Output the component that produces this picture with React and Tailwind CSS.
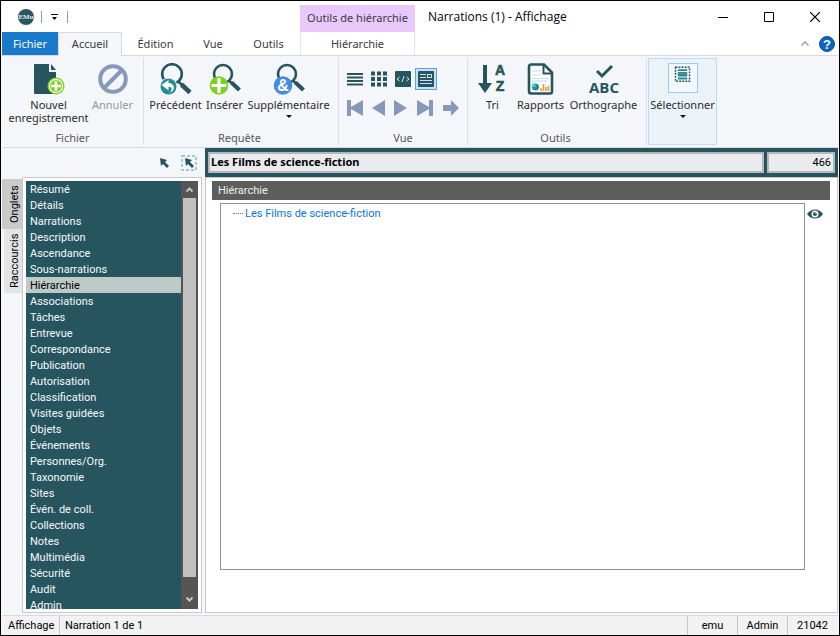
import React, { useState } from 'react';

const tabs = [
    'Résumé', 'Détails', 'Narrations', 'Description', 'Ascendance', 'Sous-narrations', 'Hiérarchie',
    'Associations', 'Tâches', 'Entrevue', 'Correspondance', 'Publication', 'Autorisation',
    'Classification', 'Visites guidées', 'Objets', 'Événements', 'Personnes/Org.', 'Taxonomie',
    'Sites', 'Évén. de coll.', 'Collections', 'Notes', 'Multimédia', 'Sécurité', 'Audit', 'Admin',
];

function LogoIcon() {
    return (
        <svg width="16" height="16" viewBox="0 0 16 16">
            <circle cx="8" cy="8" r="8" fill="#2a5761" />
            <text x="8" y="10" textAnchor="middle" fontSize="7" fontWeight="700" fontFamily="Liberation Serif, serif" fill="#e4eef0">EMu</text>
        </svg>
    );
}

function DownArrow() {
    return (
        <svg width="6" height="3" viewBox="0 0 6 3" className="mt-1">
            <path d="M0 0h6L3 3z" fill="#111" />
        </svg>
    );
}

function NewRecordIcon() {
    return (
        <svg width="32" height="32" viewBox="0 0 32 32">
            <path d="M1 2a1 1 0 0 1 1-1h14v8h7v22H2a1 1 0 0 1-1-1z" fill="#27555f" />
            <path d="M18 1l5 6h-5z" fill="#27555f" />
            <circle cx="23" cy="23" r="8.500" fill="#7bd11f" />
            <circle cx="23" cy="23" r="6.600" fill="none" stroke="#fff" strokeWidth="1.200" />
            <path d="M23 18v10M18 23h10" stroke="#fff" strokeWidth="2.600" />
        </svg>
    );
}

function CancelIcon() {
    return (
        <svg width="32" height="32" viewBox="0 0 32 32">
            <circle cx="16" cy="16" r="12.800" fill="none" stroke="#8799bb" strokeWidth="4" />
            <path d="M7 25L25 7" stroke="#8799bb" strokeWidth="4" />
        </svg>
    );
}

function PreviousIcon() {
    return (
        <svg width="32" height="32" viewBox="0 0 32 32">
            <circle cx="12" cy="11" r="9.800" fill="none" stroke="#27555f" strokeWidth="2.600" />
            <path d="M18.500 18.500l4 4" stroke="#27555f" strokeWidth="2.500" />
            <path d="M21.500 21.500l8.500 8" stroke="#27555f" strokeWidth="4.500" />
            <circle cx="8.500" cy="23.500" r="9" fill="#f4f6f9" />
            <circle cx="8.500" cy="23.500" r="8" fill="#278c92" />
            <path d="M1.500 22l7-5v3c6 0 8 7 1 10 4-4 2-6.500-1-6v3.500z" fill="#fff" />
        </svg>
    );
}

function InsertIcon() {
    return (
        <svg width="32" height="32" viewBox="0 0 32 32">
            <circle cx="14" cy="11" r="9" fill="none" stroke="#27555f" strokeWidth="2.600" />
            <path d="M20 17.500l3 3" stroke="#27555f" strokeWidth="2.500" />
            <path d="M22.500 19.500l8 7.500" stroke="#27555f" strokeWidth="4" />
            <circle cx="10" cy="22.500" r="9.300" fill="#7bd11f" />
            <path d="M10 15v15M2.500 22.500h15" stroke="#fff" strokeWidth="3.200" />
        </svg>
    );
}

function AdditionalIcon() {
    return (
        <svg width="32" height="32" viewBox="0 0 32 32" className="overflow-visible">
            <circle cx="14" cy="11" r="9" fill="none" stroke="#27555f" strokeWidth="2.600" />
            <path d="M20 17.500l3 3" stroke="#27555f" strokeWidth="2.500" />
            <path d="M22.500 19.500l8 7.500" stroke="#27555f" strokeWidth="4" />
            <circle cx="10" cy="22.500" r="9.300" fill="#438be0" />
            <text x="10" y="28" textAnchor="middle" fontSize="16" fontWeight="700" fontFamily="Liberation Sans, sans-serif" fill="#fff">&amp;</text>
        </svg>
    );
}

function SortIcon() {
    return (
        <svg width="32" height="32" viewBox="0 0 32 32" className="overflow-visible">
            <path d="M6 2h4v18h5l-7 10-7-10h5z" fill="#27555f" />
            <text x="23" y="12" textAnchor="middle" fontSize="14" fontWeight="700" fontFamily="Liberation Sans, sans-serif" fill="#27555f" stroke="#27555f" strokeWidth=".6">A</text>
            <text x="23" y="28" textAnchor="middle" fontSize="14" fontWeight="700" fontFamily="Liberation Sans, sans-serif" fill="#27555f" stroke="#27555f" strokeWidth=".6">Z</text>
        </svg>
    );
}

function ReportIcon() {
    return (
        <svg width="32" height="32" viewBox="0 0 32 32">
            <path d="M6 1.500h13l8 8v19a2 2 0 0 1-2 2H6a2 2 0 0 1-2-2v-25a2 2 0 0 1 2-2z" fill="#fff" stroke="#27555f" strokeWidth="2.600" />
            <path d="M18.500 2v8.500H27" fill="none" stroke="#27555f" strokeWidth="2" />
            <path d="M7 8h9M7 12h9M7 15.500h16M7 18h15" stroke="#c2dcf0" strokeWidth="1" />
            <circle cx="10.500" cy="24" r="3.500" fill="#278c92" />
            <path d="M10.500 24v-4a4 4 0 0 0-4 4z" fill="#3fe0b0" />
            <path d="M16 28v-3M18.500 28v-7M21 28v-4M23.500 28v-5" stroke="#e29a3a" strokeWidth="1.600" />
        </svg>
    );
}

function SpellIcon() {
    return (
        <svg width="32" height="32" viewBox="0 0 32 32" className="overflow-visible">
            <path d="M9 8l5 5L24 3" fill="none" stroke="#27555f" strokeWidth="3" />
            <text x="16" y="30" textAnchor="middle" fontSize="15" fontWeight="700" fontFamily="Open Sans, sans-serif" fill="#27555f">ABC</text>
        </svg>
    );
}

function SelectIcon() {
    return (
        <svg width="30" height="30" viewBox="0 0 30 30" className="mb-[2px] border border-[#99c9f7] bg-[#f4f8fc]">
            <rect x="7" y="3.500" width="15" height="15" fill="none" stroke="#27555f" strokeWidth="1.600" strokeDasharray="2 1.250" />
            <path d="M9.500 6.500h10M9.500 9.500h10M9.500 12.500h10M9.500 15.500h10" stroke="#278c92" strokeWidth="2" />
            <path d="M9.500 11h10" stroke="#27555f" strokeWidth="1" />
        </svg>
    );
}

function RibbonButton({ icon, label, width, disabled, menu }) {
    return (
        <button disabled={disabled} className={`flex shrink-0 flex-col items-center whitespace-pre text-center ${width} ${disabled ? 'text-[#93969c]' : 'text-[#2b2b2b]'}`}>
            {icon}
            <span className="mt-[3px]">{label}</span>
            {menu && <DownArrow />}
        </button>
    );
}

function RibbonGroup({ title, width, children }) {
    return (
        <section className={`flex shrink-0 flex-col border-r border-[#dcdfe3] pb-px ${width}`}>
            <div className="flex flex-1 items-start justify-center pt-[5px]">{children}</div>
            <h2 className="text-center text-[#55585c]">{title}</h2>
        </section>
    );
}

function ViewButtons() {
    return (
        <div className="flex flex-col pt-1">
            <div className="flex items-center">
                <button aria-label="Liste" className="flex h-6 w-6 items-center justify-center">
                    <svg width="16" height="14" viewBox="0 0 16 14"><path d="M0 2h16M0 5.500h16M0 9h16M0 12.500h16" stroke="#27555f" strokeWidth="2" /></svg>
                </button>
                <button aria-label="Vignettes" className="flex h-6 w-6 items-center justify-center">
                    <svg width="16" height="16" viewBox="0 0 16 16"><path d="M0 2.500h16M0 8h16M0 13.500h16" stroke="#27555f" strokeWidth="4" strokeDasharray="4 2" /></svg>
                </button>
                <button aria-label="Code" className="flex h-6 w-6 items-center justify-center">
                    <svg width="16" height="16" viewBox="0 0 16 16">
                        <rect width="16" height="16" rx="1" fill="#27555f" />
                        <path d="M4.500 6L2 8l2.500 2M11.500 6L14 8l-2.500 2M9 5l-2 6" fill="none" stroke="#dce8ea" />
                    </svg>
                </button>
                <button aria-label="Formulaire" className="flex h-[22px] w-[22px] items-center justify-center border border-[#5ca0e6] bg-[#c9e0f8]">
                    <svg width="16" height="16" viewBox="0 0 16 16">
                        <rect width="16" height="16" rx="1" fill="#27555f" />
                        <path d="M2 3.500h6M2 6.500h6M2 9.500h12M2 12.500h12" stroke="#c9e0f8" />
                        <rect x="9.500" y="3.500" width="4" height="3" fill="none" stroke="#c9e0f8" />
                    </svg>
                </button>
            </div>
            <div className="mt-px flex items-center">
                <button aria-label="Premier" className="flex h-8 w-6 items-center justify-center">
                    <svg width="16" height="16" viewBox="0 0 16 16"><path d="M0 0h4v7L16 0v16L4 9v7H0z" fill="#8799bb" /></svg>
                </button>
                <button aria-label="Fiche précédente" className="flex h-8 w-6 items-center justify-center">
                    <svg width="14" height="16" viewBox="0 0 14 16"><path d="M13 0v16L0 8z" fill="#8799bb" /></svg>
                </button>
                <button aria-label="Fiche suivante" className="flex h-8 w-5 items-center justify-center">
                    <svg width="14" height="16" viewBox="0 0 14 16"><path d="M0 0v16l13-8z" fill="#8799bb" /></svg>
                </button>
                <button aria-label="Dernier" className="flex h-8 w-7 items-center justify-center">
                    <svg width="16" height="16" viewBox="0 0 16 16"><path d="M16 0h-4v7L0 0v16l12-7v7h4z" fill="#8799bb" /></svg>
                </button>
                <button aria-label="Aller à" className="flex h-8 w-6 items-center justify-center">
                    <svg width="16" height="16" viewBox="0 0 16 16"><path d="M0 5h8V0l8 8-8 8v-5H0z" fill="#8799bb" /></svg>
                </button>
            </div>
        </div>
    );
}

function Header() {
    return (
        <header className="flex h-[55px] shrink-0 border-b border-[#d6d9dd] bg-white text-[#3a3a3a]">
            <div className="flex flex-col">
                <div className="flex h-[31px] items-center pl-4">
                    <LogoIcon />
                    <span className="ml-[7px] h-3 w-px bg-[#999]" />
                    <button aria-label="Personnaliser" className="mx-[9px]">
                        <svg width="7" height="6" viewBox="0 0 7 6"><path d="M0 0h7v1H0zM1 3h5L3.500 6z" fill="#000" /></svg>
                    </button>
                    <span className="h-3 w-px bg-[#999]" />
                </div>
                <nav className="flex flex-1">
                    <button className="w-14 bg-[#1979ca] pt-px text-white">Fichier</button>
                    <button className="-mb-px w-16 border border-b-0 border-[#d6d9dd] bg-[#f4f6f9]">Accueil</button>
                    <button className="w-[67px] pt-px">Édition</button>
                    <button className="w-12 pt-px">Vue</button>
                    <button className="w-[63px] pt-px">Outils</button>
                </nav>
            </div>
            <div className="flex w-[115px] shrink-0 flex-col pt-1">
                <div className="flex h-[27px] items-center justify-center bg-[#e9c9fc]">Outils de hiérarchie</div>
                <button className="flex-1 border-x border-[#e2e4e7] pt-px">Hiérarchie</button>
            </div>
            <div className="flex min-w-0 flex-1 flex-col">
                <div className="flex h-[31px] items-center justify-between pl-[13px] text-black">
                    <h1 className="font-[Open_Sans,sans-serif] text-xs">Narrations (1) - Affichage</h1>
                    <div className="flex">
                        <button aria-label="Réduire" className="flex w-[46px] justify-center">
                            <svg width="10" height="10" viewBox="0 0 10 10"><path d="M0 5.500h10" stroke="#000" /></svg>
                        </button>
                        <button aria-label="Agrandir" className="flex w-[46px] justify-center">
                            <svg width="10" height="10" viewBox="0 0 10 10"><path d="M.5.500h9v9h-9z" fill="none" stroke="#000" /></svg>
                        </button>
                        <button aria-label="Fermer" className="flex w-[46px] justify-center">
                            <svg width="10" height="10" viewBox="0 0 10 10"><path d="M0 0l10 10M10 0L0 10" stroke="#000" strokeWidth="1.200" /></svg>
                        </button>
                    </div>
                </div>
                <div className="flex flex-1 items-center justify-end gap-[10px] pr-[3px]">
                    <button aria-label="Réduire le ruban">
                        <svg width="8" height="5" viewBox="0 0 8 5"><path d="M.5 4.500L4 1l3.500 3.500" fill="none" stroke="#999" strokeWidth="1.300" /></svg>
                    </button>
                    <button aria-label="Aide">
                        <svg width="16" height="16" viewBox="0 0 16 16">
                            <circle cx="8" cy="8" r="7.500" fill="#0c65c2" stroke="#174f8c" />
                            <text x="8" y="12.500" textAnchor="middle" fontSize="13" fontWeight="700" fontFamily="Liberation Sans, sans-serif" fill="#fff">?</text>
                        </svg>
                    </button>
                </div>
            </div>
        </header>
    );
}

function Ribbon() {
    return (
        <div className="flex h-[92px] shrink-0 border-b border-[#d6d9dd] bg-[#f4f6f9] py-[2px] leading-[13px]">
            <RibbonGroup title="Fichier" width="w-[142px]">
                <RibbonButton icon={<NewRecordIcon />} label={'Nouvel\nenregistrement'} width="w-20" />
                <RibbonButton icon={<CancelIcon />} label="Annuler" width="w-12" disabled />
            </RibbonGroup>
            <RibbonGroup title="Requête" width="w-[195px] pr-[3px]">
                <RibbonButton icon={<PreviousIcon />} label="Précédent" width="w-14" />
                <RibbonButton icon={<InsertIcon />} label="Insérer" width="w-[42px]" />
                <RibbonButton icon={<AdditionalIcon />} label="Supplémentaire" width="w-[86px]" menu />
            </RibbonGroup>
            <RibbonGroup title="Vue" width="w-[129px]">
                <ViewButtons />
            </RibbonGroup>
            <RibbonGroup title="Outils" width="w-[179px] pr-[3px]">
                <RibbonButton icon={<SortIcon />} label="Tri" width="w-10" />
                <RibbonButton icon={<ReportIcon />} label="Rapports" width="w-14" />
                <RibbonButton icon={<SpellIcon />} label="Orthographe" width="w-[70px]" />
            </RibbonGroup>
            <div className="ml-px flex shrink-0 items-start border border-[#bcdcf8] bg-[#ecf3f8] pt-1">
                <RibbonButton icon={<SelectIcon />} label="Sélectionner" width="w-[67px]" menu />
            </div>
        </div>
    );
}

function Sidebar({ current, onSelect }) {
    return (
        <aside className="flex w-[200px] shrink-0 flex-col">
            <div className="flex h-[29px] shrink-0 items-center justify-end gap-3 pr-[5px]">
                <button aria-label="Pointeur">
                    <svg width="10" height="10" viewBox="0 0 10 10"><path d="M1 0l7 2-2 2 4 4-2 2-4-4-2 2z" fill="#27555f" /></svg>
                </button>
                <button aria-label="Sélection">
                    <svg width="16" height="16" viewBox="0 0 16 16">
                        <rect x="1" y="1" width="14" height="14" fill="none" stroke="#7fc0c2" strokeWidth="1.500" strokeDasharray="3 2" />
                        <path d="M4 3l7 2-2 2 4 4-2 2-4-4-2 2z" fill="#27555f" />
                    </svg>
                </button>
            </div>
            <div className="flex min-h-0 flex-1">
                <div className="flex w-5 shrink-0 flex-col items-end pt-[2px] leading-[14px] text-black">
                    <button className="h-[50px] w-5 rotate-180 bg-[#cacaca] pr-[6px] [writing-mode:vertical-rl]">Onglets</button>
                    <button className="h-16 w-[18px] rotate-180 bg-[#e4e4e4] pr-1 [writing-mode:vertical-rl]">Raccourcis</button>
                </div>
                <div className="flex min-w-0 flex-1 border border-[#c8c8c8] bg-white p-[3px]">
                    <ul className="min-w-0 flex-1 overflow-hidden bg-[#27555f] leading-[14px] text-[#f6f9f9]">
                        {tabs.map(tab => (
                            <li key={tab}>
                                <button
                                    onClick={() => onSelect(tab)}
                                    className={`block w-full pt-[2px] pl-1 text-left ${tab === current ? 'bg-[#bccbc8] text-black' : ''}`}
                                >
                                    {tab}
                                </button>
                            </li>
                        ))}
                    </ul>
                    <div className="flex w-[17px] shrink-0 flex-col items-center bg-[#555]">
                        <button aria-label="Défiler vers le haut" className="flex h-[17px] items-center">
                            <svg width="7" height="5" viewBox="0 0 7 5"><path d="M.5 4.500l3-3 3 3" fill="none" stroke="#c8c8c8" strokeWidth="2" /></svg>
                        </button>
                        <div className="w-[13px] flex-1 bg-[#c1c1c1]" />
                        <button aria-label="Défiler vers le bas" className="flex h-8 items-center pt-4 pb-1">
                            <svg width="7" height="5" viewBox="0 0 7 5"><path d="M.5.500l3 3 3-3" fill="none" stroke="#c8c8c8" strokeWidth="2" /></svg>
                        </button>
                    </div>
                </div>
            </div>
        </aside>
    );
}

function RecordView() {
    return (
        <main className="ml-[3px] flex min-w-0 flex-1 flex-col">
            <div className="flex h-[29px] shrink-0 gap-[3px] bg-[#27555f] px-[3px] py-1 text-black">
                <input readOnly aria-label="Titre" value="Les Films de science-fiction" className="min-w-0 flex-1 border-2 border-[#b4b8ba] bg-[#eaebec] px-px font-[Noto_Sans,sans-serif] font-bold" />
                <input readOnly aria-label="Numéro" value="466" className="w-[68px] border-2 border-[#b4b8ba] bg-[#eaebec] px-[2px] pt-[2px] text-right" />
            </div>
            <div className="flex min-h-0 flex-1 flex-col border border-[#c8c8c8] bg-white pt-[3px] pr-[7px] pl-[6px]">
                <h2 className="mb-[3px] h-[19px] shrink-0 bg-[#5c5e5d] pl-[6px] leading-5 text-[#f0f0f0]">Hiérarchie</h2>
                <div className="mb-[42px] flex min-h-0 flex-1 items-start pl-2">
                    <div className="flex flex-1 items-start self-stretch border border-[#8d8d8d] pl-3">
                        <span className="mt-[9px] mr-[2px] w-[10px] border-t border-dotted border-[#777]" />
                        <a href="#record" className="leading-5 text-[#0a74dc]">Les Films de science-fiction</a>
                    </div>
                    <button aria-label="Afficher" className="mt-1 mr-[7px] ml-[2px]">
                        <svg width="16" height="14" viewBox="0 0 16 14">
                            <path d="M0 7c4-6 12-6 16 0-4 6-12 6-16 0z" fill="#27555f" />
                            <circle cx="8" cy="7" r="3.500" fill="#fff" />
                            <circle cx="8" cy="7" r="2" fill="#27555f" />
                            <circle cx="9" cy="6" r=".8" fill="#fff" />
                        </svg>
                    </button>
                </div>
            </div>
        </main>
    );
}

function StatusBar() {
    return (
        <footer className="mt-[2px] flex h-5 shrink-0 items-stretch border-t border-[#d9d9d9] bg-[#f2f2f2] pr-px leading-5 text-black">
            <span className="w-[58px] border-r border-[#c8c8c8] pl-[6px]">Affichage</span>
            <span className="flex-1 pl-[5px]">Narration 1 de 1</span>
            <span className="w-[50px] border-l border-[#c8c8c8] text-center">emu</span>
            <span className="w-[50px] border-l border-[#c8c8c8] text-center">Admin</span>
            <span className="w-[50px] border-l border-[#c8c8c8] text-center">21042</span>
        </footer>
    );
}

function App() {
    const [current, setCurrent] = useState('Hiérarchie');

    return (
        <div className="flex h-screen flex-col overflow-hidden border border-black bg-[#f4f6f9] px-px text-[11px]">
            <div className="shrink-0 font-[Noto_Sans,sans-serif]">
                <Header />
                <Ribbon />
            </div>
            <div className="flex min-h-0 flex-1 flex-col font-[Roboto,sans-serif]">
                <div className="flex min-h-0 flex-1">
                    <Sidebar current={current} onSelect={setCurrent} />
                    <RecordView />
                </div>
                <StatusBar />
            </div>
        </div>
    );
}

export default App;
